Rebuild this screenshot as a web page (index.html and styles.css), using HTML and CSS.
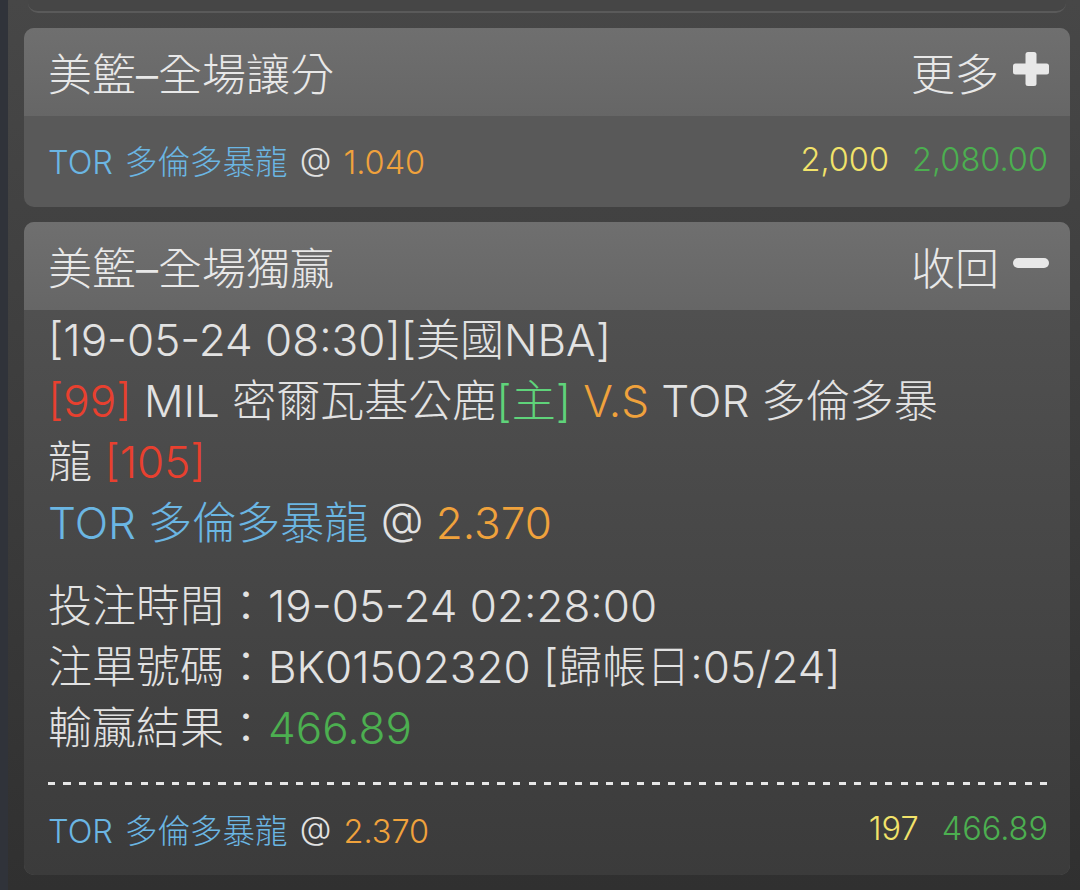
FILE: index.html
```html
<html>
<head>
    <title>注單明細</title>
    <link rel="stylesheet" href="styles.css">
</head>
<body>
    <div class="page">
        <div class="prev-card"></div>

        <div class="card">
            <div class="card-head">
                <span class="title">美籃–全場讓分</span>
                <span class="toggle">更多
                    <svg class="icon" width="36" height="34" viewBox="0 0 36 34"><rect x="12.5" y="0" width="11" height="34" rx="2.5"/><rect x="0" y="11.5" width="36" height="11" rx="2.5"/></svg>
                </span>
            </div>
            <div class="card-row short">
                <span><span class="blue">TOR 多倫多暴龍</span> @ <span class="orange">1.040</span></span>
                <span class="amounts"><span class="yellow">2,000</span><span class="green">2,080.00</span></span>
            </div>
        </div>

        <div class="card">
            <div class="card-head">
                <span class="title">美籃–全場獨贏</span>
                <span class="toggle">收回
                    <svg class="icon" width="36" height="34" viewBox="0 0 36 34"><rect x="0" y="12" width="36" height="10" rx="5"/></svg>
                </span>
            </div>
            <div class="card-body">
                <div class="lines">
                    <p>[19-05-24 08:30][美國NBA]</p>
                    <p class="match"><span class="red">[99]</span> MIL 密爾瓦基公鹿<span class="lime">[主]</span> <span class="orange">V.S</span> TOR 多倫多暴龍 <span class="red">[105]</span></p>
                    <p><span class="blue">TOR 多倫多暴龍</span> @ <span class="orange">2.370</span></p>
                </div>
                <div class="lines info">
                    <p>投注時間：19-05-24 02:28:00</p>
                    <p>注單號碼：BK01502320 [歸帳日:05/24]</p>
                    <p>輸贏結果：<span class="green">466.89</span></p>
                </div>
                <div class="dashes"></div>
                <div class="card-row">
                    <span><span class="blue">TOR 多倫多暴龍</span> @ <span class="orange">2.370</span></span>
                    <span class="amounts"><span class="yellow">197</span><span class="green">466.89</span></span>
                </div>
            </div>
        </div>
    </div>
</body>
</html>
```

FILE: styles.css
```css
body {
    margin: 0;
    height: 890px;
    font-family: Inter, "Noto Sans CJK TC", sans-serif;
    font-weight: 300;
    color: #e2e2e2;
    background: linear-gradient(to bottom, #474747, #3a3a3a 60%, #303030);
    border-left: 8px solid #30333a;
    overflow: hidden;
}
.page {
    display: flex;
    flex-direction: column;
    gap: 15px;
    padding: 0 10px 0 16px;
}
.prev-card {
    height: 11px;
    margin: 0 4px;
    background: #464646;
    border-bottom: 2px solid #5a5a5a;
    border-radius: 0 0 10px 10px;
}
.card {
    border-radius: 10px;
    overflow: hidden;
    background: #595959;
}
.card-head {
    height: 88px;
    display: flex;
    justify-content: space-between;
    align-items: center;
    padding: 0 21px 0 24px;
    background: linear-gradient(to bottom, #6f6f6f, #666666);
    font-size: 44px;
    color: #e8e8e8;
}
.toggle {
    display: flex;
    align-items: center;
    gap: 14px;
}
.icon {
    fill: #e8e8e8;
    margin-bottom: 6px;
}
.card-row {
    display: flex;
    justify-content: space-between;
    align-items: center;
    height: 86px;
    padding: 0 22px 0 24px;
    font-size: 32.5px;
    word-spacing: 3px;
}
.card-row.short {
    height: 91px;
    padding-bottom: 4px;
    box-sizing: border-box;
}
.amounts {
    display: flex;
    gap: 23px;
}
.card-body {
    background: linear-gradient(to bottom, #505050, #3b3b3b);
    padding-bottom: 4px;
}
.lines {
    padding: 0 22px 0 24px;
    font-size: 44px;
}
.lines p {
    margin: 0;
    line-height: 61px;
}
.match {
    max-width: 915px;
}
.info {
    margin-top: 22px;
}
.dashes {
    height: 3px;
    margin: 23px 22px 0 24px;
    background: repeating-linear-gradient(to right, #e6e6e6 0 7px, transparent 7px 15.5px);
}
.blue { color: #6bb6e3; }
.orange { color: #f0a23c; }
.yellow { color: #f2e36a; }
.green { color: #4caf50; }
.red { color: #e8402f; }
.lime { color: #5fd37a; }
```
